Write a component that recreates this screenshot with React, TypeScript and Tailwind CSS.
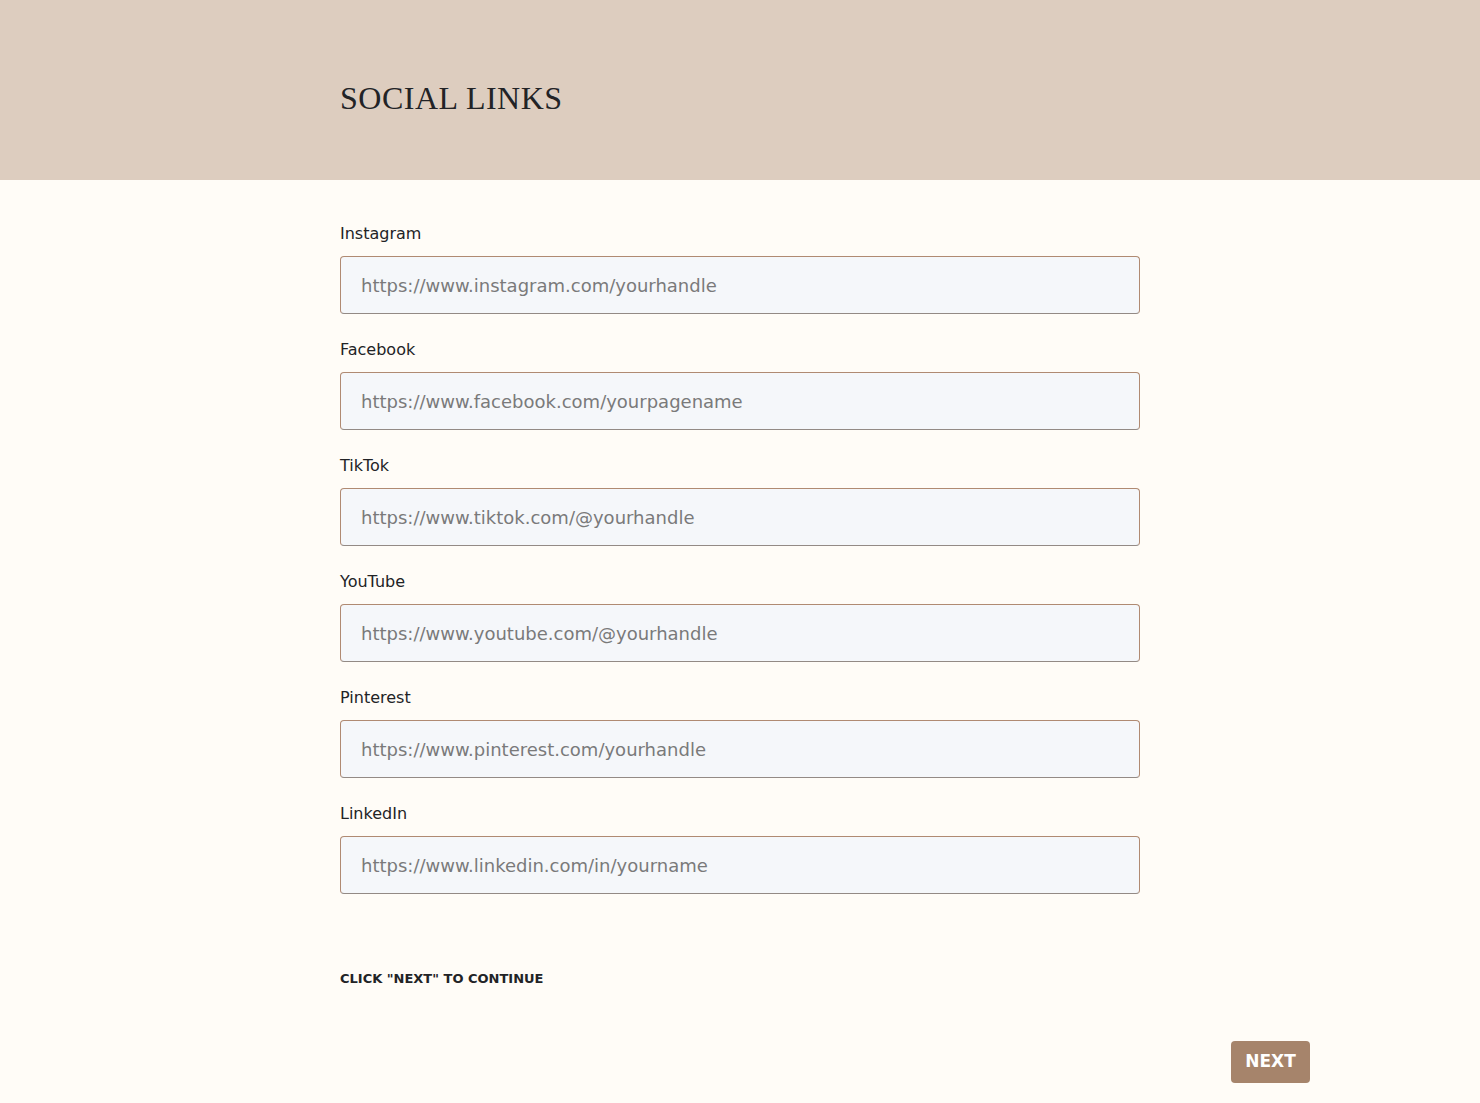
import React from "react";

const fields = [
  { label: "Instagram", ph: "https://www.instagram.com/yourhandle" },
  { label: "Facebook", ph: "https://www.facebook.com/yourpagename" },
  { label: "TikTok", ph: "https://www.tiktok.com/@yourhandle" },
  { label: "YouTube", ph: "https://www.youtube.com/@yourhandle" },
  { label: "Pinterest", ph: "https://www.pinterest.com/yourhandle" },
  { label: "LinkedIn", ph: "https://www.linkedin.com/in/yourname" },
];

export default function App() {
  return (
    <div className="min-h-[1103px] bg-[#fffcf7] text-[#222326]" style={{ fontFamily: '"DejaVu Sans", "Open Sans", sans-serif' }}>
      <header className="h-[180px] bg-[#ddcdbf] flex items-center">
        <div className="w-[800px] mx-auto">
          <h1 className="text-[32px] tracking-[0.5px] text-[#222326] pt-[16px]" style={{ fontFamily: '"Liberation Serif", serif' }}>
            SOCIAL LINKS
          </h1>
        </div>
      </header>
      <main className="w-[800px] mx-auto pt-[42px]">
        <div className="flex flex-col gap-[24px]">
          {fields.map((f) => (
            <div key={f.label} className="flex flex-col gap-[10px]">
              <label className="text-[16px] leading-[24px] text-[#222326]">{f.label}</label>
              <input
                type="text"
                placeholder={f.ph}
                className="h-[58px] w-full rounded-[4px] border border-[#b08a72] border-b-[#938a85] bg-[#f5f7fa] px-[20px] text-[18px] outline-none placeholder:text-[#7a7a7a]"
              />
            </div>
          ))}
        </div>
        <p className="mt-[75px] text-[13px] font-bold uppercase text-[#222326]">CLICK "NEXT" TO CONTINUE</p>
      </main>
      <div className="flex justify-end pr-[170px] mt-[52px]">
        <button className="h-[42px] w-[79px] rounded-[4px] bg-[#a6846b] text-white text-[17px] font-bold">NEXT</button>
      </div>
    </div>
  );
}
